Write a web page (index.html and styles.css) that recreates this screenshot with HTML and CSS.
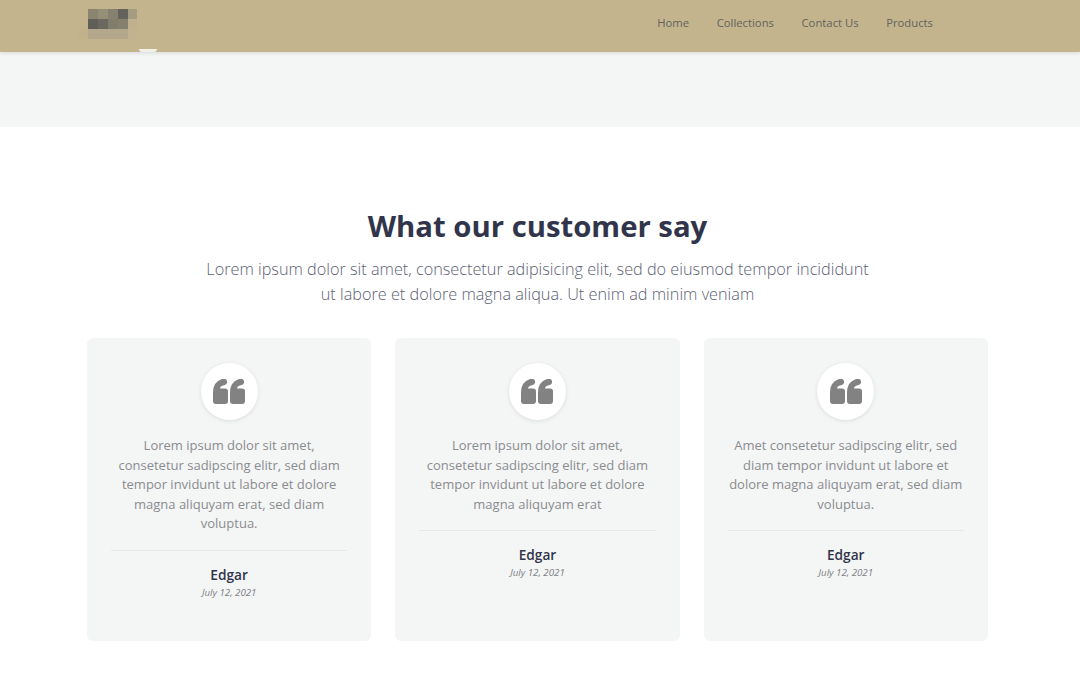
FILE: index.html
```html
<!DOCTYPE html>
<html lang="en">
  <head>
    <meta charset="UTF-8" />
    <title>What our customer say</title>
    <link rel="stylesheet" href="styles.css">
  </head>
  <body>
    <header class="topbar">
      <div class="topbar-inner">
        <a class="logo" href="#">
          <svg width="60" height="40" viewBox="0 0 60 40" shape-rendering="crispEdges">
            <rect x="0" y="29" width="9" height="10" fill="#c2b28c" />
            <rect x="9" y="9" width="10" height="10" fill="#8a8571" />
            <rect x="19" y="9" width="10" height="10" fill="#968f78" />
            <rect x="29" y="9" width="10" height="10" fill="#86816e" />
            <rect x="39" y="9" width="10" height="10" fill="#63625c" />
            <rect x="49" y="9" width="9" height="10" fill="#a69c81" />
            <rect x="9" y="19" width="10" height="10" fill="#5f5e59" />
            <rect x="19" y="19" width="10" height="10" fill="#6b695f" />
            <rect x="29" y="19" width="10" height="10" fill="#817d6b" />
            <rect x="39" y="19" width="10" height="10" fill="#86816e" />
            <rect x="49" y="19" width="9" height="10" fill="#bfb18f" />
            <rect x="9" y="29" width="40" height="10" fill="#b3a88b" />
            <rect x="49" y="29" width="9" height="10" fill="#c2b28f" />
          </svg>
        </a>
        <nav class="nav">
          <a href="#">Home</a>
          <a href="#">Collections</a>
          <a href="#">Contact Us</a>
          <a href="#">Products</a>
        </nav>
      </div>
      <span class="notch"></span>
    </header>
    <div class="band"></div>
    <main class="testimonials">
      <h2>What our customer say</h2>
      <p class="lead">
        Lorem ipsum dolor sit amet, consectetur adipisicing elit, sed do eiusmod tempor incididunt
        ut labore et dolore magna aliqua. Ut enim ad minim veniam
      </p>
      <div class="cards">
        <article class="card">
          <div class="quote">
            <svg width="32" height="25" viewBox="0 0 32 26" preserveAspectRatio="none"><path class="q" d="M0 14Q0 3 9 0Q13-1 14 2L14 4Q14 6 11 6.500Q7 7.500 7 10L12 10Q15 10 15 13L15 23Q15 26 12 26L3 26Q0 26 0 23ZM17 14Q17 3 26 0Q30-1 31 2L31 4Q31 6 28 6.500Q24 7.500 24 10L29 10Q32 10 32 13L32 23Q32 26 29 26L20 26Q17 26 17 23Z" /></svg>
          </div>
          <p class="text">Lorem ipsum dolor sit amet, consetetur sadipscing elitr, sed diam tempor invidunt ut labore et dolore magna aliquyam erat, sed diam voluptua.</p>
          <div class="author">
            <strong>Edgar</strong>
            <em>July 12, 2021</em>
          </div>
        </article>
        <article class="card">
          <div class="quote">
            <svg width="32" height="25" viewBox="0 0 32 26" preserveAspectRatio="none"><path class="q" d="M0 14Q0 3 9 0Q13-1 14 2L14 4Q14 6 11 6.500Q7 7.500 7 10L12 10Q15 10 15 13L15 23Q15 26 12 26L3 26Q0 26 0 23ZM17 14Q17 3 26 0Q30-1 31 2L31 4Q31 6 28 6.500Q24 7.500 24 10L29 10Q32 10 32 13L32 23Q32 26 29 26L20 26Q17 26 17 23Z" /></svg>
          </div>
          <p class="text">Lorem ipsum dolor sit amet, consetetur sadipscing elitr, sed diam tempor invidunt ut labore et dolore magna aliquyam erat</p>
          <div class="author">
            <strong>Edgar</strong>
            <em>July 12, 2021</em>
          </div>
        </article>
        <article class="card">
          <div class="quote">
            <svg width="32" height="25" viewBox="0 0 32 26" preserveAspectRatio="none"><path class="q" d="M0 14Q0 3 9 0Q13-1 14 2L14 4Q14 6 11 6.500Q7 7.500 7 10L12 10Q15 10 15 13L15 23Q15 26 12 26L3 26Q0 26 0 23ZM17 14Q17 3 26 0Q30-1 31 2L31 4Q31 6 28 6.500Q24 7.500 24 10L29 10Q32 10 32 13L32 23Q32 26 29 26L20 26Q17 26 17 23Z" /></svg>
          </div>
          <p class="text">Amet consetetur sadipscing elitr, sed diam tempor invidunt ut labore et dolore magna aliquyam erat, sed diam voluptua.</p>
          <div class="author">
            <strong>Edgar</strong>
            <em>July 12, 2021</em>
          </div>
        </article>
      </div>
    </main>
  </body>
</html>
```

FILE: styles.css
```css
* {
  box-sizing: border-box;
}
html,
body {
  height: 678px;
  overflow: hidden;
}
body {
  margin: 0;
  background: #fff;
  font-family: "Open Sans", sans-serif;
}
a {
  text-decoration: none;
}
.topbar {
  position: relative;
  z-index: 1;
  height: 52px;
  background: #c3b48e;
  box-shadow: 0 1px 4px rgba(0, 0, 0, 0.12);
}
.topbar-inner {
  display: flex;
  justify-content: space-between;
  width: 906px;
  height: 100%;
  margin-left: 79px;
}
.logo {
  display: block;
  height: 40px;
}
.logo svg {
  filter: blur(0.6px);
}
.nav {
  display: flex;
  align-items: center;
  gap: 27.500px;
  height: 45px;
  padding-right: 52px;
}
.nav a {
  color: #64635c;
  font-size: 11.300px;
}
.notch {
  position: absolute;
  left: 139px;
  top: 49px;
  width: 18px;
  height: 3px;
  border-radius: 0 0 9px 9px;
  background: #f0efe8;
}
.band {
  height: 74.500px;
  background: #f4f5f5;
}
.testimonials {
  width: 1075px;
  padding-top: 79.500px;
  text-align: center;
}
h2 {
  margin: 0;
  color: #31354b;
  font-size: 29.300px;
  font-weight: 700;
  line-height: 41px;
}
.lead {
  width: 670px;
  margin: 10px auto 0;
  color: #5d6173;
  font-size: 16.250px;
  font-weight: 300;
  line-height: 25px;
}
.cards {
  display: grid;
  grid-template-columns: repeat(3, 284.300px);
  gap: 24px;
  width: 901px;
  margin: 31px 0 0 87px;
}
.card {
  height: 302.500px;
  padding: 25px 24px 0;
  background: #f4f5f5;
  border-radius: 6px;
}
.quote {
  display: flex;
  align-items: center;
  justify-content: center;
  width: 57px;
  height: 57px;
  margin: 0 auto;
  background: #fff;
  border-radius: 50%;
  box-shadow: 0 1px 4px rgba(0, 0, 0, 0.1);
}
.q {
  fill: #828282;
}
.text {
  margin: 16px 0 0;
  padding-bottom: 16px;
  color: #8a8c90;
  font-size: 13px;
  line-height: 19.500px;
  border-bottom: 1px solid #e6e8e8;
}
.author {
  padding-top: 14px;
}
.author strong {
  display: block;
  color: #31354b;
  font-size: 13.700px;
  font-weight: 600;
  line-height: 20px;
}
.author em {
  display: block;
  color: #7c7f85;
  font-size: 9.700px;
  line-height: 15px;
}
```
